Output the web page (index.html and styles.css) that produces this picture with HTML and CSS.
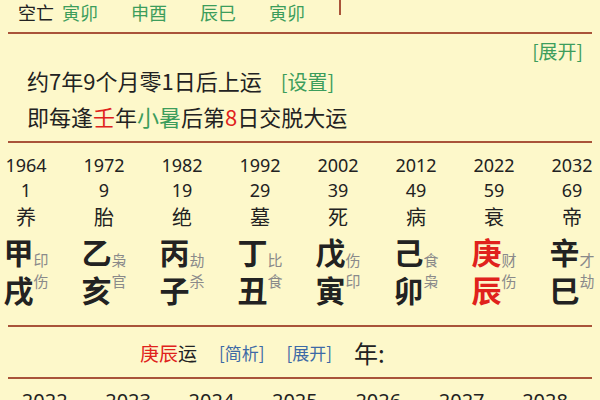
FILE: index.html
```html
<!DOCTYPE html>
<html lang="zh">
<head>
<meta charset="utf-8">
<link rel="stylesheet" href="styles.css">
</head>
<body>
<div class="page">
  <div class="top">
    <span class="kw">空亡</span>
    <span class="pair green">寅卯</span>
    <span class="pair green">申酉</span>
    <span class="pair green">辰巳</span>
    <span class="pair green">寅卯</span>
    <span class="vbar"></span>
  </div>
  <div class="hr"></div>
  <div class="expand"><span class="green">[展开]</span></div>
  <div class="info">约7年9个月零1日后上运<span class="green set">[设置]</span></div>
  <div class="info">即每逢<span class="red">壬</span>年<span class="green">小暑</span>后第<span class="red">8</span>日交脱大运</div>
  <div class="hr hr2"></div>

  <div class="yun">
    <div class="col"><div class="yr">1964</div><div class="age">1</div><div class="st">养</div><div class="gz"><div class="big"><div>甲</div><div>戌</div></div><div class="small"><div>印</div><div>伤</div></div></div></div>
    <div class="col"><div class="yr">1972</div><div class="age">9</div><div class="st">胎</div><div class="gz"><div class="big"><div>乙</div><div>亥</div></div><div class="small"><div>枭</div><div>官</div></div></div></div>
    <div class="col"><div class="yr">1982</div><div class="age">19</div><div class="st">绝</div><div class="gz"><div class="big"><div>丙</div><div>子</div></div><div class="small"><div>劫</div><div>杀</div></div></div></div>
    <div class="col"><div class="yr">1992</div><div class="age">29</div><div class="st">墓</div><div class="gz"><div class="big"><div>丁</div><div>丑</div></div><div class="small"><div>比</div><div>食</div></div></div></div>
    <div class="col"><div class="yr">2002</div><div class="age">39</div><div class="st">死</div><div class="gz"><div class="big"><div>戊</div><div>寅</div></div><div class="small"><div>伤</div><div>印</div></div></div></div>
    <div class="col"><div class="yr">2012</div><div class="age">49</div><div class="st">病</div><div class="gz"><div class="big"><div>己</div><div>卯</div></div><div class="small"><div>食</div><div>枭</div></div></div></div>
    <div class="col"><div class="yr">2022</div><div class="age">59</div><div class="st">衰</div><div class="gz"><div class="big red"><div>庚</div><div>辰</div></div><div class="small"><div>财</div><div>伤</div></div></div></div>
    <div class="col"><div class="yr">2032</div><div class="age">69</div><div class="st">帝</div><div class="gz"><div class="big"><div>辛</div><div>巳</div></div><div class="small"><div>才</div><div>劫</div></div></div></div>
  </div>

  <div class="hr hr3"></div>
  <div class="cur">
    <span><span class="red">庚辰</span>运</span>
    <span class="blue">[简析]</span>
    <span class="blue">[展开]</span>
    <span class="nian">年:</span>
  </div>
  <div class="hr"></div>
  <div class="years">
    <div>2022</div><div>2023</div><div>2024</div><div>2025</div><div>2026</div><div>2027</div><div>2028</div>
  </div>
</div>
</body>
</html>
```
FILE: styles.css
```css
html, body {
  margin: 0;
  padding: 0;
  background: #fdf8ca;
}
body {
  width: 600px;
  height: 400px;
  overflow: hidden;
  font-family: "Noto Sans CJK SC", "Noto Sans", sans-serif;
  color: #222;
}
.page {
  width: 600px;
}
.green { color: #3c9d5c; }
.red { color: #e0221c; }
.blue { color: #3d6aa6; }

.top {
  display: flex;
  height: 32px;
  padding-left: 18px;
  font-size: 18px;
  line-height: 24px;
  box-sizing: border-box;
}
.kw { width: 44px; }
.pair { width: 69px; }
.vbar {
  width: 2px;
  height: 15px;
  margin-left: 1px;
  background: #a9543a;
}
.hr {
  height: 2px;
  margin: 0 8px;
  background: #a9543a;
}
.expand {
  height: 29px;
  padding-top: 5px;
  box-sizing: border-box;
  text-align: right;
  padding-right: 17px;
  font-size: 19px;
  line-height: 24px;
}
.info {
  padding-left: 27px;
  font-size: 22px;
  line-height: 34px;
}
.set {
  font-size: 20px;
  margin-left: 19px;
}
.hr2 { margin-top: 8px; }

.yun {
  display: grid;
  grid-template-columns: repeat(8, 78px);
  margin-left: -13px;
  margin-top: 10px;
  text-align: center;
}
.yr, .age {
  font-size: 18px;
  line-height: 25px;
  font-family: "Noto Sans", sans-serif;
}
.st {
  font-size: 20px;
  line-height: 27px;
}
.gz {
  display: flex;
  justify-content: center;
  align-items: center;
  margin-top: 2px;
}
.big {
  font-size: 30px;
  font-weight: bold;
  line-height: 38px;
}
.small {
  font-size: 15px;
  line-height: 21px;
  color: #8a8a8a;
}
.hr3 { margin-top: 17px; }

.cur {
  display: flex;
  align-items: center;
  height: 50px;
  padding-left: 140px;
  font-size: 19px;
  gap: 22px;
}
.cur .blue { font-size: 17px; }
.nian { font-size: 24px; }

.years {
  display: grid;
  grid-template-columns: repeat(7, 83.4px);
  margin-left: 3px;
  text-align: center;
  font-family: "Noto Sans", sans-serif;
  font-size: 20px;
  line-height: 44px;
}
```
